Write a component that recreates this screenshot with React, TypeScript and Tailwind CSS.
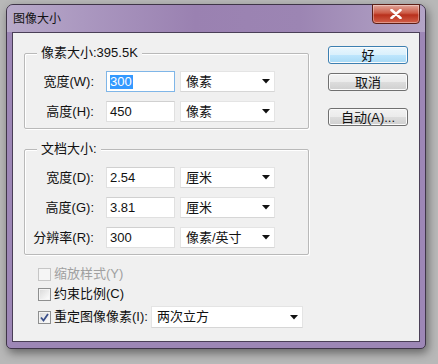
import React from "react";

const Arrow = () => (
  <svg width="8" height="5" viewBox="0 0 8 5">
    <path d="M0 0 H8 L4 4.5 Z" fill="#111" />
  </svg>
);

const Select = ({ text, width = "w-[95px]", height = "h-[21px]" }: { text: string; width?: string; height?: string }) => (
  <div
    className={`${width} ${height} bg-white border border-[#e4e4e4] border-b-[#d6d6d6] flex items-center justify-between pl-[5px] pr-[4px] text-[13px] text-[#111]`}
  >
    <span>{text}</span>
    <Arrow />
  </div>
);

const Field = ({ value, focused }: { value: string; focused?: boolean }) => (
  <div
    className={`w-[69px] h-[21px] bg-white border flex items-center pl-[3px] text-[13px] text-[#111] ${
      focused ? "border-[#7fb6e8]" : "border-[#e0e0e0] border-t-[#d0d0d0]"
    }`}
  >
    {focused ? <span className="bg-[#3399ff] text-white leading-[14px] pr-[1px]">{value}</span> : value}
  </div>
);

const Row = ({ label, value, unit, focused }: { label: string; value: string; unit: string; focused?: boolean }) => (
  <div className="flex items-center h-[21px]">
    <div className="w-[69px] text-right text-[13px] text-[#111] whitespace-nowrap">{label}</div>
    <div className="ml-[12px]">
      <Field value={value} focused={focused} />
    </div>
    <div className="ml-[5px]">
      <Select text={unit} />
    </div>
  </div>
);

const Group = ({ title, children }: { title: string; children: React.ReactNode }) => (
  <div className="relative w-[285px] border border-[#b9b9b9] rounded-[2px] shadow-[inset_1px_1px_0_#ffffff,1px_1px_0_#ffffff] pt-[17px] pb-[6px] flex flex-col gap-[9px]">
    <span className="absolute left-[12px] -top-[9px] px-[4px] bg-[#f0f0f0] text-[13px] leading-[16px] text-[#111]">
      {title}
    </span>
    {children}
  </div>
);

const Button = ({ text, primary }: { text: string; primary?: boolean }) => (
  <div
    className={`w-[80px] h-[18px] rounded-[3px] border flex items-center justify-center text-[13px] leading-none text-[#111] shadow-[inset_0_0_0_1px_#fbfbfb] ${
      primary
        ? "border-[#3c7fb1] bg-[linear-gradient(#eaf6fd_0%,#d9f0fc_50%,#bee6fd_50%,#a7d9f5_100%)]"
        : "border-[#707070] bg-[linear-gradient(#f2f2f2_0%,#ebebeb_50%,#dddddd_50%,#cfcfcf_100%)]"
    }`}
  >
    {text}
  </div>
);

const Check = ({ checked, disabled }: { checked?: boolean; disabled?: boolean }) => (
  <div
    className={`w-[13px] h-[13px] border flex items-center justify-center shrink-0 ${
      disabled
        ? "border-[#c6c6c6] bg-[#f5f5f5]"
        : "border-[#8e8f8f] bg-[linear-gradient(135deg,#d8d8d8,#ffffff)] shadow-[inset_0_0_0_1px_#f4f4f4]"
    }`}
  >
    {checked && (
      <svg width="9" height="9" viewBox="0 0 9 9">
        <path d="M1 4.5 L3.5 7.5 L8 1" stroke="#3a4f8a" strokeWidth="1.8" fill="none" />
      </svg>
    )}
  </div>
);

export default function App() {
  return (
    <div className="w-[438px] h-[364px] bg-[#b8b8b8] pt-[4px] pl-[6px] font-[family-name:'Liberation_Sans','Noto_Sans_CJK_SC',sans-serif]">
      <div className="w-[420px] h-[345px] rounded-t-[7px] rounded-b-[5px] border border-[#3f3548] bg-[#9d87b6] shadow-[2px_4px_10px_rgba(0,0,0,0.45)] flex flex-col">
        {/* title bar */}
        <div className="h-[27px] rounded-t-[6px] bg-[linear-gradient(90deg,#b8aac9_0%,#ab98c0_18%,#9a81b1_45%,#9c85b3_70%,#b3a4c6_100%)] flex items-start justify-between pl-[6px] pr-[5px]">
          <span className="mt-[7px] text-[12px] leading-[14px] text-[#111]">图像大小</span>
          <div className="w-[48px] h-[20px] -mt-[1px] rounded-b-[4px] border border-[#5b1e16] bg-[linear-gradient(#e0a59a_0%,#cc5a45_45%,#b8301c_55%,#d2604a_100%)] flex items-center justify-center shadow-[inset_0_0_0_1px_rgba(255,255,255,0.35)]">
            <svg width="12" height="10" viewBox="0 0 12 10">
              <path d="M1.5 1 L10.5 9 M10.5 1 L1.5 9" stroke="#ffffff" strokeWidth="2.6" strokeLinecap="round" />
            </svg>
          </div>
        </div>
        {/* client */}
        <div className="mx-[5px] w-[408px] h-[310px] border border-[#4a3f57] bg-[#f0f0f0] flex">
          <div className="pl-[11px] pt-[20px] flex flex-col">
            <Group title="像素大小:395.5K">
              <Row label="宽度(W):" value="300" unit="像素" focused />
              <Row label="高度(H):" value="450" unit="像素" />
            </Group>
            <div className="mt-[20px]">
              <Group title="文档大小:">
                <Row label="宽度(D):" value="2.54" unit="厘米" />
                <Row label="高度(G):" value="3.81" unit="厘米" />
                <Row label="分辨率(R):" value="300" unit="像素/英寸" />
              </Group>
            </div>
            <div className="pl-[14px] mt-[9px] flex flex-col text-[13px]">
              <div className="flex items-center h-[20px] gap-[3px] text-[#a0a0a0]">
                <Check disabled />
                <span>缩放样式(Y)</span>
              </div>
              <div className="flex items-center h-[20px] gap-[3px] text-[#111]">
                <Check />
                <span>约束比例(C)</span>
              </div>
              <div className="flex items-center h-[22px] mt-[2px] text-[#111]">
                <Check checked />
                <span className="w-[100px] pl-[3px] whitespace-nowrap">重定图像像素(I):</span>
                <Select text="两次立方" width="w-[152px]" height="h-[22px]" />
              </div>
            </div>
          </div>
          <div className="ml-[19px] pt-[13px] flex flex-col">
            <Button text="好" primary />
            <div className="mt-[9px]">
              <Button text="取消" />
            </div>
            <div className="mt-[17px]">
              <Button text="自动(A)..." />
            </div>
          </div>
        </div>
      </div>
    </div>
  );
}
